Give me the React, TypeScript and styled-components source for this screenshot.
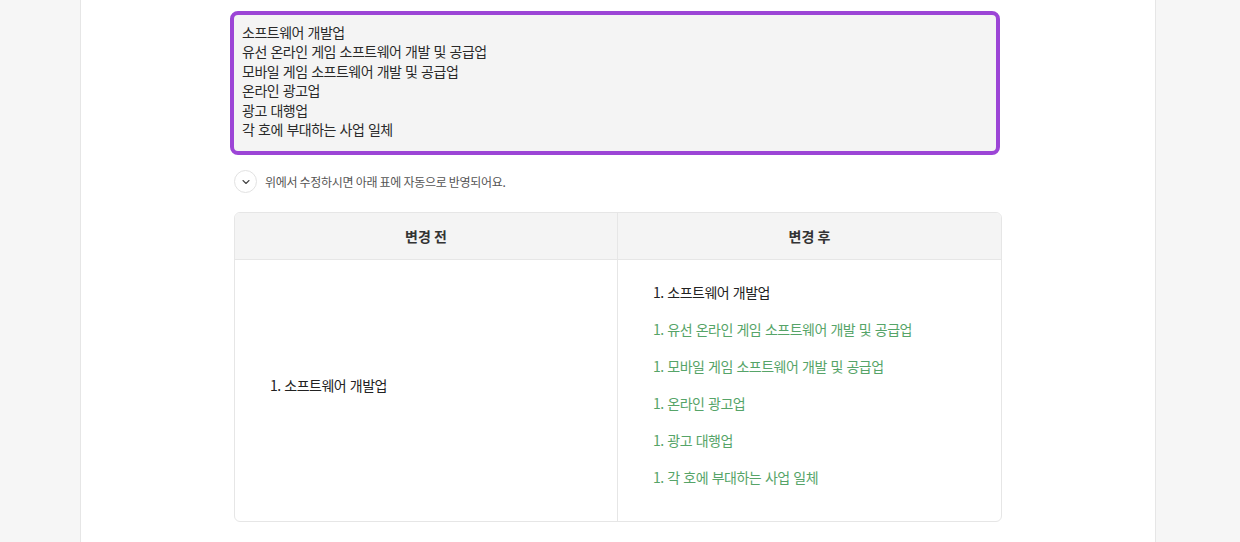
import * as React from "react"
import styled, {createGlobalStyle} from "styled-components"

const GlobalStyle = createGlobalStyle`
  html, body {
    margin: 0;
    padding: 0;
    background: #f6f6f6;
    font-family: "Noto Sans CJK KR", "Noto Sans", sans-serif;
    color: #333;
  }
`

const before = ["소프트웨어 개발업"]
const after = [
  "소프트웨어 개발업",
  "유선 온라인 게임 소프트웨어 개발 및 공급업",
  "모바일 게임 소프트웨어 개발 및 공급업",
  "온라인 광고업",
  "광고 대행업",
  "각 호에 부대하는 사업 일체",
]

const Panel = styled.div`
  box-sizing: border-box;
  margin-left: 80px;
  width: 1076px;
  min-height: 542px;
  background: #fff;
  border-left: 1px solid #e6e6e6;
  border-right: 1px solid #e6e6e6;
  padding: 11px 0 20px;
  display: flex;
  justify-content: center;
`

const Column = styled.div`
  width: 768px;
  display: flex;
  flex-direction: column;
`

const Editor = styled.textarea`
  box-sizing: border-box;
  width: 770px;
  height: 144px;
  margin-left: -4px;
  padding: 8px 8px;
  border: 4px solid #9c45d6;
  border-radius: 8px;
  background: #f4f4f4;
  font-family: "Noto Sans CJK KR", "Noto Sans", sans-serif;
  font-size: 14px;
  letter-spacing: -0.5px;
  word-spacing: 1px;
  line-height: 19.4px;
  color: #2a2a2a;
  resize: none;
  outline: none;
  overflow: hidden;
`

const Hint = styled.div`
  display: flex;
  align-items: center;
  gap: 8px;
  margin-top: 15px;
  font-size: 12px;
  letter-spacing: -0.3px;
  color: #555;
`

const Toggle = styled.button`
  width: 23px;
  height: 23px;
  border-radius: 50%;
  border: 1px solid #e2e2e2;
  background: #fff;
  padding: 0;
  display: flex;
  align-items: center;
  justify-content: center;
  color: #444;
`

const Table = styled.div`
  margin-top: 19px;
  border: 1px solid #e6e6e6;
  border-radius: 6px;
  overflow: hidden;
  display: grid;
  grid-template-columns: 1fr 1fr;
`

const Head = styled.div<{ $last?: boolean }>`
  height: 46px;
  display: flex;
  align-items: center;
  justify-content: center;
  background: #f4f4f4;
  border-bottom: 1px solid #e6e6e6;
  border-right: ${p => (p.$last ? "none" : "1px solid #e6e6e6")};
  font-size: 14px;
  font-weight: 700;
  color: #333;
`

const Cell = styled.div<{ $last?: boolean }>`
  min-height: 260px;
  box-sizing: border-box;
  padding: 22px 35px 17px;
  display: flex;
  flex-direction: column;
  justify-content: center;
  border-right: ${p => (p.$last ? "none" : "1px solid #e6e6e6")};
`

const List = styled.ol`
  margin: 0;
  padding: 0;
  list-style: none;
`

const Item = styled.li<{ $added?: boolean }>`
  margin-bottom: 16px;
  font-size: 14px;
  letter-spacing: -0.5px;
  word-spacing: 1px;
  line-height: 21px;
  color: ${p => (p.$added ? "#56a468" : "#222")};
`

const Chevron = () => (
  <svg width="12" height="12" viewBox="0 0 24 24" fill="none" stroke="currentColor" strokeWidth="2.2" strokeLinecap="round" strokeLinejoin="round">
    <path d="M6 9l6 6 6-6" />
  </svg>
)

const App = () => {
  return (
    <>
      <GlobalStyle />
      <Panel>
        <Column>
          <Editor readOnly value={after.join("\n")} />
          <Hint>
            <Toggle><Chevron /></Toggle>
            위에서 수정하시면 아래 표에 자동으로 반영되어요.
          </Hint>
          <Table>
            <Head>변경 전</Head>
            <Head $last>변경 후</Head>
            <Cell>
              <List>
                {before.map((t, i) => (
                  <Item key={i}>1. {t}</Item>
                ))}
              </List>
            </Cell>
            <Cell $last>
              <List>
                {after.map((t, i) => (
                  <Item key={i} $added={!before.includes(t)}>1. {t}</Item>
                ))}
              </List>
            </Cell>
          </Table>
        </Column>
      </Panel>
    </>
  )
}

export default App
